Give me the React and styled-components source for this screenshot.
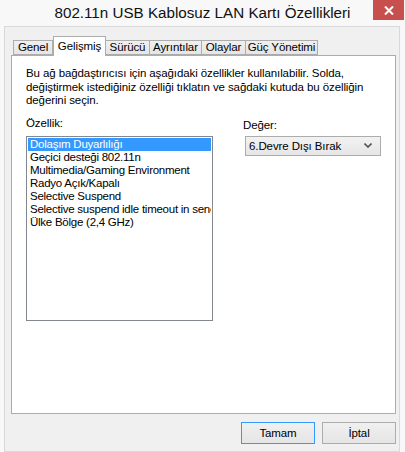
import React from "react";
import styled, { createGlobalStyle } from "styled-components";

const GlobalStyle = createGlobalStyle`
  html, body {
    margin: 0;
    padding: 0;
    background: #f8f8f8;
  }
  * {
    box-sizing: border-box;
  }
`;

const uiFont = `"Liberation Sans", Arial, sans-serif`;

const Window = styled.div`
  width: 405px;
  height: 452px;
  display: flex;
  flex-direction: column;
  background: #f8f8f8;
  padding: 0 5px 0 4px;
  font-family: ${uiFont};
  font-size: 11.5px;
  letter-spacing: -0.1px;
  color: #000;
`;

const TitleBar = styled.div`
  position: relative;
  height: 26px;
  margin: 0 -5px 0 -4px;
  display: flex;
  align-items: center;
  justify-content: center;
  font-size: 15.2px;
  letter-spacing: 0;
  color: #111;
  padding: 0 0 1px 0;
`;

const CloseButton = styled.div`
  position: absolute;
  top: 0;
  right: 1px;
  width: 31px;
  height: 20px;
  background: #c7504f;
  display: flex;
  align-items: center;
  justify-content: center;
`;

const Client = styled.div`
  flex: 1;
  display: flex;
  flex-direction: column;
  background: #f0f0f0;
  border: 1px solid #d9d9d9;
  padding: 9px 1px 7px 6px;
`;

const TabRow = styled.div`
  height: 19px;
  display: flex;
  align-items: flex-end;
  padding-left: 2px;
  position: relative;
  z-index: 1;
`;

const Tab = styled.div`
  width: ${(p) => p.$w}px;
  height: ${(p) => (p.$active ? 20 : 15)}px;
  margin-bottom: ${(p) => (p.$active ? -1 : 0)}px;
  border: 1px solid #acacac;
  border-bottom: ${(p) => (p.$active ? "none" : "1px solid #acacac")};
  border-left: ${(p) => (p.$first || p.$active ? "1px solid #acacac" : "none")};
  background: ${(p) =>
    p.$active ? "#ffffff" : "linear-gradient(#f0f0f0, #e5e5e5)"};
  display: flex;
  justify-content: center;
  align-items: ${(p) => (p.$active ? "flex-start" : "center")};
  padding-top: ${(p) => (p.$active ? 3 : 0)}px;
  white-space: nowrap;
  line-height: 13px;
`;

const Panel = styled.div`
  height: 359px;
  margin-right: 2px;
  background: #fff;
  border: 1px solid #acacac;
  padding: 11px 14px 0 14px;
  display: flex;
  flex-direction: column;
`;

const Description = styled.p`
  margin: 0;
  line-height: 13.5px;
`;

const Fields = styled.div`
  display: flex;
  margin-top: 8px;
`;

const FieldColumn = styled.div`
  display: flex;
  flex-direction: column;
  width: ${(p) => p.$w}px;
  margin-left: ${(p) => p.$ml || 0}px;
`;

const Label = styled.div`
  height: 14px;
  line-height: 14px;
  margin-top: ${(p) => p.$mt || 0}px;
  margin-bottom: ${(p) => p.$mb || 0}px;
`;

const ListBox = styled.div`
  height: 185px;
  border: 1px solid #828790;
  padding: 1px;
  overflow: hidden;
`;

const ListItem = styled.div`
  height: 13px;
  line-height: 13px;
  padding-left: 2px;
  letter-spacing: -0.25px;
  white-space: nowrap;
  overflow: hidden;
  background: ${(p) => (p.$selected ? "#3399ff" : "transparent")};
  color: ${(p) => (p.$selected ? "#fff" : "#000")};
`;

const Select = styled.div`
  height: 20px;
  margin-left: 2px;
  border: 1px solid #acacac;
  background: linear-gradient(#f2f2f2, #e6e6e6);
  display: flex;
  align-items: center;
  justify-content: space-between;
  padding: 0 8px 0 3px;
`;

const ButtonRow = styled.div`
  display: flex;
  justify-content: flex-end;
  gap: 7px;
  margin-top: 8px;
  padding-right: 2px;
`;

const Button = styled.div`
  width: 74px;
  height: 22px;
  border: 1px solid ${(p) => (p.$default ? "#3399ff" : "#acacac")};
  background: linear-gradient(#f0f0f0, #e5e5e5);
  display: flex;
  align-items: center;
  justify-content: center;
`;

const tabs = [
  { label: "Genel", w: 40 },
  { label: "Gelişmiş", w: 53, active: true },
  { label: "Sürücü", w: 44 },
  { label: "Ayrıntılar", w: 52 },
  { label: "Olaylar", w: 44 },
  { label: "Güç Yönetimi", w: 72 },
];

const items = [
  "Dolaşım Duyarlılığı",
  "Geçici desteği 802.11n",
  "Multimedia/Gaming Environment",
  "Radyo Açık/Kapalı",
  "Selective Suspend",
  "Selective suspend idle timeout in seno",
  "Ülke Bölge (2,4 GHz)",
];

export default function App() {
  return (
    <Window>
      <GlobalStyle />
      <TitleBar>
        802.11n USB Kablosuz LAN Kartı Özellikleri
        <CloseButton>
          <svg width="10" height="9" viewBox="0 0 10 9">
            <path d="M1 0.5 L9 8.5 M9 0.5 L1 8.5" stroke="#fff" strokeWidth="2" />
          </svg>
        </CloseButton>
      </TitleBar>
      <Client>
        <TabRow>
          {tabs.map((t, i) => (
            <Tab key={t.label} $w={t.w} $active={t.active} $first={i === 0}>
              {t.label}
            </Tab>
          ))}
        </TabRow>
        <Panel>
          <Description>
            Bu ağ bağdaştırıcısı için aşağıdaki özellikler kullanılabilir. Solda,
            <br />
            değiştirmek istediğiniz özelliği tıklatın ve sağdaki kutuda bu özelliğin
            <br />
            değerini seçin.
          </Description>
          <Fields>
            <FieldColumn $w={187}>
              <Label $mb={6}>Özellik:</Label>
              <ListBox>
                {items.map((it, i) => (
                  <ListItem key={it} $selected={i === 0}>
                    {it}
                  </ListItem>
                ))}
              </ListBox>
            </FieldColumn>
            <FieldColumn $w={140} $ml={30}>
              <Label $mt={2} $mb={4}>Değer:</Label>
              <Select>
                <span>6.Devre Dışı Bırak</span>
                <svg width="8" height="5" viewBox="0 0 8 5">
                  <path d="M0.5 0.5 L4 4 L7.5 0.5" stroke="#555" strokeWidth="1.6" fill="none" />
                </svg>
              </Select>
            </FieldColumn>
          </Fields>
        </Panel>
        <ButtonRow>
          <Button $default>Tamam</Button>
          <Button>İptal</Button>
        </ButtonRow>
      </Client>
    </Window>
  );
}
